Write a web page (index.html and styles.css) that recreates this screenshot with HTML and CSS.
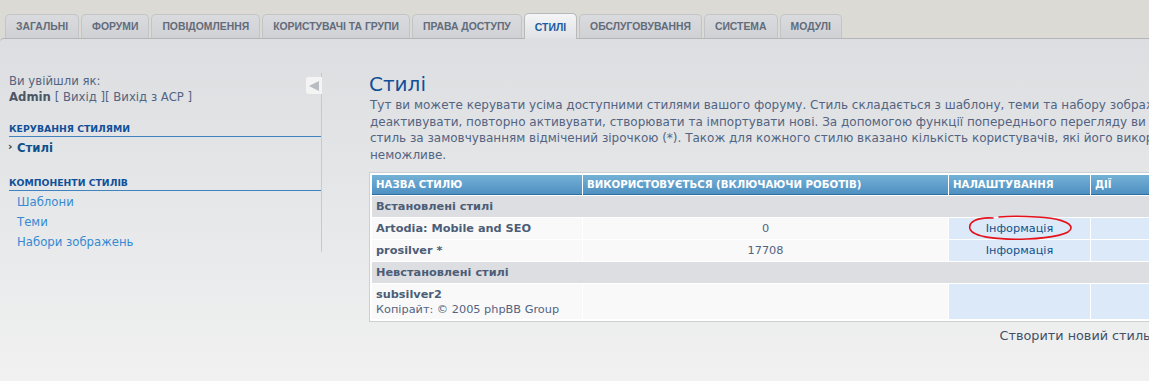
FILE: index.html
```html
<!DOCTYPE html>
<html lang="uk">
  <head>
    <meta charset="UTF-8" />
    <title>Стилі</title>
    <link rel="stylesheet" href="styles.css">
  </head>
  <body>
    <div class="page">
      <ul class="tabs">
        <li class="tab">Загальні</li>
        <li class="tab">Форуми</li>
        <li class="tab">Повідомлення</li>
        <li class="tab">Користувачі та групи</li>
        <li class="tab">Права доступу</li>
        <li class="tab active">Стилі</li>
        <li class="tab">Обслуговування</li>
        <li class="tab">Система</li>
        <li class="tab">Модулі</li>
      </ul>

      <div class="panel">
        <div class="sidebar">
          <div class="menu">
            <p class="login">Ви увійшли як:<br><b>Admin</b> [ <a href="#">Вихід</a> ][ <a href="#">Вихід з ACP</a> ]</p>

            <h3 class="menu-head">Керування стилями</h3>
            <ul class="menu-list">
              <li class="current"><a href="#">Стилі</a></li>
            </ul>

            <h3 class="menu-head">Компоненти стилів</h3>
            <ul class="menu-list">
              <li><a href="#">Шаблони</a></li>
              <li><a href="#">Теми</a></li>
              <li><a href="#">Набори зображень</a></li>
            </ul>
          </div>
          <span class="toggle"><svg width="12" height="10" viewBox="0 0 12 10"><path d="M1 5 L11 0 L11 10 Z" fill="#b9bcc0"/></svg></span>
        </div>

        <div class="main">
          <h1>Стилі</h1>
          <p class="explain">Тут ви можете керувати усіма доступними стилями вашого форуму. Стиль складається з шаблону, теми та набору зображень. Ви можете змінювати існуючі стилі, видаляти,<br>деактивувати, повторно активувати, створювати та імпортувати нові. За допомогою функції попереднього перегляду ви можете побачити, як виглядатиме стиль. Поточний<br>стиль за замовчуванням відмічений зірочкою (*). Також для кожного стилю вказано кількість користувачів, які його використовують; зверніть увагу, що перевизначення<br>неможливе.</p>

          <table class="styles-table">
            <thead>
              <tr>
                <th class="col-name">Назва стилю</th>
                <th class="col-used">Використовується (включаючи роботів)</th>
                <th class="col-opts">Налаштування</th>
                <th class="col-acts">Дії</th>
              </tr>
            </thead>
            <tbody>
              <tr class="group"><td colspan="4">Встановлені стилі</td></tr>
              <tr>
                <td class="name">Artodia: Mobile and SEO</td>
                <td class="num">0</td>
                <td class="opts"><span class="marked"><a href="#">Інформація</a><svg class="circle" width="108" height="30" viewBox="0 0 108 30"><path d="M26 5 C10 4 1 9 3 16 C6 24 30 27 60 26 C85 25 104 21 104 15 C104 9 90 5 70 4 C55 3 42 3 32 4" fill="none" stroke="#e3121b" stroke-width="1.6" stroke-linecap="round"/></svg></span></td>
                <td class="acts"></td>
              </tr>
              <tr>
                <td class="name">prosilver *</td>
                <td class="num">17708</td>
                <td class="opts"><a href="#">Інформація</a></td>
                <td class="acts"></td>
              </tr>
              <tr class="group"><td colspan="4">Невстановлені стилі</td></tr>
              <tr>
                <td class="name">subsilver2<br><span class="copy">Копірайт: © 2005 phpBB Group</span></td>
                <td class="num"></td>
                <td class="opts"></td>
                <td class="acts"></td>
              </tr>
            </tbody>
          </table>

          <div class="create">Створити новий стиль: <input type="text" class="create-input"></div>
        </div>
      </div>
    </div>
  </body>
</html>
```

FILE: styles.css
```css
html,
body {
  margin: 0;
  padding: 0;
  overflow: hidden;
}

body {
  font-family: "DejaVu Sans", Verdana, sans-serif;
  background-color: #dcdad5;
  color: #536482;
}

a {
  text-decoration: none;
}

.page {
  width: 1400px;
}

/* tab strip */
.tabs {
  list-style: none;
  margin: 0;
  padding: 14px 0 0 5px;
  display: flex;
  gap: 2px;
  align-items: flex-end;
  height: 24px;
}

.tab {
  height: 23px;
  line-height: 24px;
  padding: 0 10px;
  font-family: "Liberation Sans", Arial, sans-serif;
  font-size: 10.4px;
  font-weight: bold;
  text-transform: uppercase;
  color: #636b7b;
  background: linear-gradient(#d9dbde, #cfd1d4);
  border: 1px solid #c3c4c6;
  border-bottom: none;
  border-radius: 5px 5px 0 0;
}

.tab.active {
  height: 25px;
  line-height: 27px;
  color: #1a5b9f;
  background: linear-gradient(#f4f5f6, #dfe1e4);
  border-color: #b7b9bc;
  position: relative;
  z-index: 2;
  margin-bottom: -1px;
}

/* main panel */
.panel {
  display: flex;
  border-top: 1px solid #b3b5b8;
  border-radius: 4px 0 0 0;
  background: linear-gradient(#dcdee1, #f2f2f2 360px);
  min-height: 360px;
}

.sidebar {
  width: 313px;
  flex-shrink: 0;
  padding: 34px 0 0 9px;
  position: relative;
}

.menu {
  border-right: 1px solid #c7c9cc;
}

.login {
  margin: 0 0 17px;
  font-size: 11.7px;
  line-height: 16px;
  color: #536482;
}

.login b {
  color: #4c5766;
}

.login a {
  color: #536482;
}

.menu-head {
  margin: 0;
  font-size: 9.3px;
  text-transform: uppercase;
  color: #115098;
  padding-bottom: 1px;
  border-bottom: 1px solid #3f83c0;
  line-height: 13px;
}

.menu-list {
  list-style: none;
  margin: 0 0 18px;
  padding: 1px 0 0;
}

.menu-list li {
  font-size: 11.7px;
  line-height: 20px;
  padding-left: 8px;
}

.menu-list li a {
  color: #368ad2;
}

.menu-list li.current {
  position: relative;
}

.menu-list li.current a {
  color: #105289;
  font-weight: bold;
}

.menu-list li.current::before {
  content: "›";
  position: absolute;
  left: -1px;
  top: -1px;
  font-weight: bold;
  color: #333;
  font-size: 11px;
}

.menu-list:last-child {
  margin-bottom: 0;
}

.toggle {
  position: absolute;
  top: 38px;
  right: 0;
  width: 16px;
  height: 17px;
  background: #f4f4f5;
  border-radius: 3px 0 0 3px;
  display: flex;
  align-items: center;
  justify-content: center;
}

.main {
  flex: 1;
  padding: 33px 0 0 47px;
}

h1 {
  margin: 0;
  font-size: 20px;
  font-weight: normal;
  color: #115098;
  line-height: 25px;
}

.explain {
  margin: 0 0 8px 1px;
  font-size: 12px;
  line-height: 16.7px;
  color: #536482;
  white-space: nowrap;
}

/* table */
.styles-table {
  width: 1020px;
  border: 1px solid #cdcfd2;
  border-spacing: 1px;
  padding: 1px;
  background-color: #fff;
  font-size: 11.3px;
  color: #4c5d77;
}

.styles-table th {
  height: 19px;
  padding: 0 4px;
  font-size: 10.2px;
  font-weight: bold;
  text-transform: uppercase;
  text-align: left;
  color: #fff;
  background: linear-gradient(#74b1d6, #4f90c2);
  border-bottom: 1px solid #2e6d9f;
}

.col-name {
  width: 202px;
}

.col-used {
  width: 357px;
}

.col-opts {
  width: 133px;
}

.styles-table td {
  height: 21px;
  padding: 0 4px;
  background-color: #f9f9f9;
}

.styles-table tr.group td {
  background-color: #dcdee2;
  font-weight: bold;
  color: #4c5d77;
}

.styles-table td.name {
  font-weight: bold;
  line-height: 15px;
}

.styles-table td.num {
  text-align: center;
  color: #536482;
}

.styles-table td.opts,
.styles-table td.acts {
  background-color: #dce9f9;
  text-align: center;
}

.styles-table td.opts a {
  color: #105289;
}

.copy {
  font-weight: normal;
  color: #536482;
}

.styles-table tr:last-child td {
  height: 34px;
  padding-top: 1px;
}

.marked {
  position: relative;
}

.circle {
  position: absolute;
  left: -19px;
  top: -9px;
}

.create {
  width: 1020px;
  margin-top: 3px;
  text-align: right;
  font-size: 12.8px;
  color: #425067;
}

.create-input {
  box-sizing: border-box;
  width: 224px;
  margin-left: 6px;
}
```
